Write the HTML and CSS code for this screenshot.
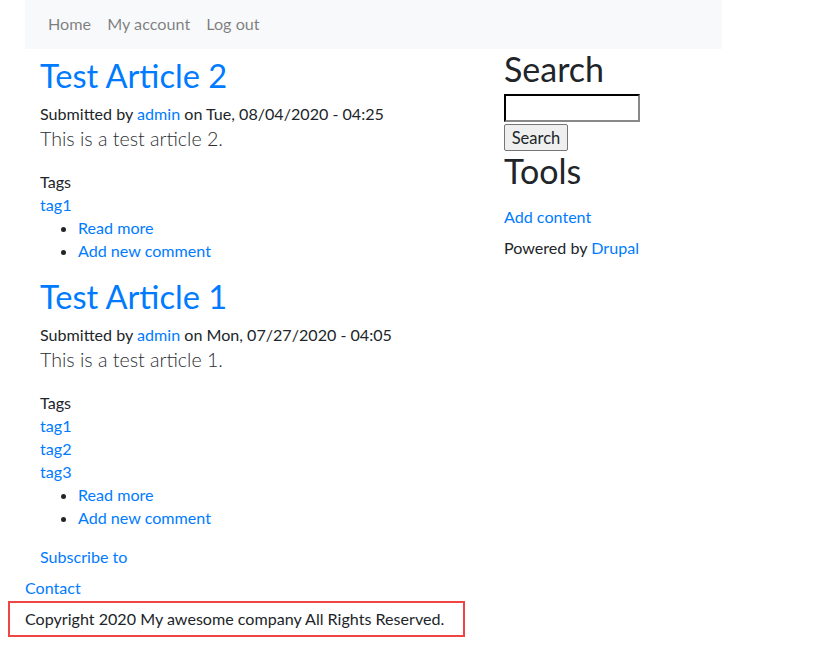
FILE: index.html
```html
<!DOCTYPE html>
<html lang="en">
<head>
<meta charset="utf-8">
<title>Drupal</title>
<link rel="stylesheet" href="styles.css">
</head>
<body>
<div class="page">
  <nav class="navbar">
    <a href="#">Home</a>
    <a href="#">My account</a>
    <a href="#">Log out</a>
  </nav>
  <div class="row">
    <main class="main">
      <article class="article first">
        <h2 class="title"><a href="#">Test Article 2</a></h2>
        <div class="meta">Submitted by <a href="#">admin</a> on Tue, 08/04/2020 - 04:25</div>
        <p class="lead">This is a test article 2.</p>
        <div class="tags">
          <div class="label">Tags</div>
          <div><a href="#">tag1</a></div>
        </div>
        <ul class="links">
          <li><a href="#">Read more</a></li>
          <li><a href="#">Add new comment</a></li>
        </ul>
      </article>
      <article class="article">
        <h2 class="title"><a href="#">Test Article 1</a></h2>
        <div class="meta">Submitted by <a href="#">admin</a> on Mon, 07/27/2020 - 04:05</div>
        <p class="lead">This is a test article 1.</p>
        <div class="tags">
          <div class="label">Tags</div>
          <div><a href="#">tag1</a></div>
          <div><a href="#">tag2</a></div>
          <div><a href="#">tag3</a></div>
        </div>
        <ul class="links">
          <li><a href="#">Read more</a></li>
          <li><a href="#">Add new comment</a></li>
        </ul>
      </article>
      <div class="feed"><a href="#">Subscribe to</a></div>
    </main>
    <aside class="sidebar">
      <h2 class="block-title">Search</h2>
      <form class="search">
        <input class="search-input" type="text">
        <button class="search-btn" type="button">Search</button>
      </form>
      <h2 class="block-title tools">Tools</h2>
      <div class="tool-link"><a href="#">Add content</a></div>
      <div class="powered">Powered by <a href="#">Drupal</a></div>
    </aside>
  </div>
  <div class="contact"><a href="#">Contact</a></div>
</div>
<footer class="copyright">Copyright 2020 My awesome company All Rights Reserved.</footer>
</body>
</html>
```

FILE: styles.css
```css
* { box-sizing: border-box; }
body {
  margin: 0;
  font-family: Lato, "Noto Sans", sans-serif;
  font-size: 16.1px;
  line-height: 23px;
  color: #212529;
  background: #fff;
}
a { color: #007bff; text-decoration: none; }
.page { padding-left: 25px; width: 722px; }
.navbar {
  background: #f8f9fa;
  height: 49px;
  display: flex;
  align-items: center;
  gap: 16px;
  padding: 0 0 2px 23px;
  font-size: 16.2px;
}
.navbar a { color: rgba(0,0,0,.5); }
.row { display: grid; grid-template-columns: 464px 233px; }
.main { padding: 0 15px; }
.sidebar { padding: 0 15px; }
.title {
  margin: 7px 0 0;
  font-size: 32.6px;
  line-height: 40px;
  font-weight: 400;
}
.article + .article .title { margin-top: 15.5px; }
.meta { margin-top: 6px; }
.lead {
  margin: 2px 0 0;
  font-size: 19.6px;
  line-height: 24px;
  font-weight: 300;
  color: #2b2f33;
}
.tags { margin-top: 18.5px; }
.links { margin: 0; padding-left: 38px; }
.feed { margin-top: 16px; }
.block-title {
  margin: 0;
  font-size: 34px;
  line-height: 40px;
  font-weight: 400;
}
.search { margin: 5px 0 0; display: flex; flex-direction: column; align-items: flex-start; gap: 2px; }
.search-input {
  width: 136px;
  height: 28px;
  border: 2px inset #767676;
  border-color: #333 #888 #888 #333;
  margin: 0;
  padding: 0 4px;
}
.search-btn {
  height: 27px;
  width: 64px;
  margin: 0;
  padding: 0;
  font-family: inherit;
  font-size: 16.5px;
  color: #212529;
  background: #efefef;
  border: 1px solid #767676;
  border-radius: 2px;
}
.tools { margin-top: 0; }
.tool-link { margin-top: 13.5px; }
.powered { margin-top: 8px; }
.contact { margin-top: 8px; }
.copyright {
  margin: 2px 0 0 8px;
  width: 457px;
  height: 36px;
  border: 2px solid #f04545;
  padding-left: 15px;
  display: flex;
  align-items: center;
}
```
